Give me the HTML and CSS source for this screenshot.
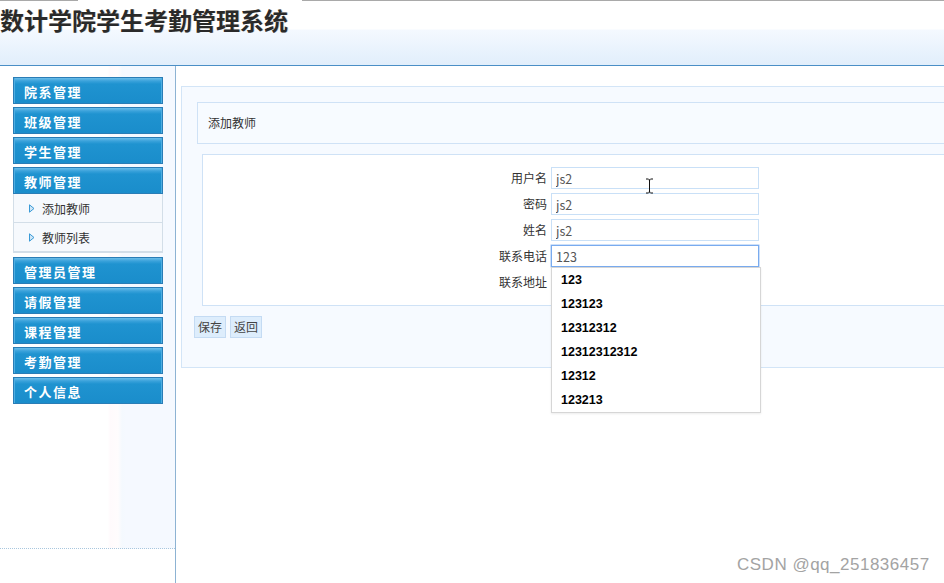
FILE: index.html
```html
<!DOCTYPE html>
<html lang="zh-CN">
<head>
<meta charset="utf-8">
<title>数计学院学生考勤管理系统</title>
<link rel="stylesheet" href="styles.css">
</head>
<body>
<header class="header">
  <h1 class="title">数计学院学生考勤管理系统</h1>
</header>
<div class="layout">
  <aside class="sidebar">
    <div class="side-panel">
      <nav class="menu">
        <div class="menu-btn">院系管理</div>
        <div class="menu-btn">班级管理</div>
        <div class="menu-btn">学生管理</div>
        <div class="menu-btn open">教师管理</div>
        <ul class="submenu">
          <li class="sub-item"><svg class="tri" width="6" height="9" viewBox="0 0 6 9"><path d="M0.5 0.8 L5 4.5 L0.5 8.2 Z" fill="#cfe6f7" stroke="#3a9ad6" stroke-width="1"/></svg>添加教师</li>
          <li class="sub-item"><svg class="tri" width="6" height="9" viewBox="0 0 6 9"><path d="M0.5 0.8 L5 4.5 L0.5 8.2 Z" fill="#cfe6f7" stroke="#3a9ad6" stroke-width="1"/></svg>教师列表</li>
        </ul>
        <div class="menu-btn">管理员管理</div>
        <div class="menu-btn">请假管理</div>
        <div class="menu-btn">课程管理</div>
        <div class="menu-btn">考勤管理</div>
        <div class="menu-btn">个人信息</div>
      </nav>
    </div>
  </aside>
  <main class="main">
    <section class="outer">
      <div class="page-head">添加教师</div>
      <div class="form-box">
        <div class="form-row"><label class="lbl">用户名</label><input class="inp" type="text" value="js2"></div>
        <div class="form-row"><label class="lbl">密码</label><input class="inp" type="text" value="js2"></div>
        <div class="form-row"><label class="lbl">姓名</label><input class="inp" type="text" value="js2"></div>
        <div class="form-row"><label class="lbl">联系电话</label><input class="inp focus" type="text" value="123"></div>
        <div class="form-row"><label class="lbl">联系地址</label><input class="inp" type="text" value=""></div>
      </div>
      <div class="actions">
        <button class="btn">保存</button>
        <button class="btn">返回</button>
      </div>
    </section>
  </main>
</div>
<ul class="autocomplete">
  <li>123</li>
  <li>123123</li>
  <li>12312312</li>
  <li>12312312312</li>
  <li>12312</li>
  <li>123213</li>
</ul>
<svg class="cursor" width="9" height="16" viewBox="0 0 9 16"><path d="M1 1 H3.5 M5.5 1 H8 M3.5 1 Q4.5 1.5 4.5 3 V13 Q4.5 14.5 3.5 15 M5.5 1 Q4.5 1.5 4.5 3 M4.5 13 Q4.5 14.5 5.5 15 M1 15 H3.5 M5.5 15 H8" fill="none" stroke="#111" stroke-width="1"/></svg>
<div class="watermark">CSDN @qq_251836457</div>
</body>
</html>
```

FILE: styles.css
```css
* { box-sizing: border-box; }
html, body {
  margin: 0;
  padding: 0;
  width: 944px;
  height: 583px;
  overflow: hidden;
  background: #fff;
  font-family: "Noto Sans CJK SC", "Liberation Sans", sans-serif;
  color: #333;
}
.header {
  height: 66px;
  border-bottom: 1px solid #4a8fc6;
  background:
    linear-gradient(to right, #a9a9a9 78px, transparent 78px, transparent 302px, #a9a9a9 302px) top left / 100% 1px no-repeat,
    linear-gradient(to bottom, #fff 0, #fff 29px, #f4f9ff 30px, #e1eefb 65px);
}
.title {
  margin: 0;
  padding-top: 5px;
  font-size: 24px;
  line-height: 30px;
  font-weight: bold;
  color: #2a2a2a;
  letter-spacing: 0;
  text-shadow: 1px 0 0 rgba(120,80,40,0.25);
}
.layout {
  display: flex;
  height: 517px;
}
.sidebar {
  width: 176px;
  flex: none;
  border-right: 1px solid #8db3d3;
}
.side-panel {
  height: 483px;
  border-bottom: 1px dotted #a9c7de;
  background: linear-gradient(to right, #fff 108px, #fffafc 110px, #fffcfd 118px, #f4f9fe 122px, #f5f9ff 126px, #f5f9ff 100%);
}
.menu {
  padding: 11px 0 0 13px;
  width: 163px;
}
.menu-btn {
  width: 150px;
  height: 27px;
  margin-bottom: 3px;
  border: 1px solid #2a7db6;
  background: linear-gradient(to bottom, #6cbde9 0, #3aa2db 3px, #1f93d0 6px, #1a8dcb 100%);
  box-shadow: inset 1px 0 0 #4eaee2, inset -1px 0 0 #4eaee2;
  color: #fff;
  font-size: 13px;
  font-weight: bold;
  line-height: 27px;
  padding-left: 10px;
  letter-spacing: 1.5px;
}
.menu-btn.open { margin-bottom: 0; }
.submenu {
  list-style: none;
  margin: 0 0 4px 0;
  padding: 0;
  width: 150px;
  border-left: 1px solid #d3dee8;
  border-right: 1px solid #d3dee8;
  background: #f6f9fd;
}
.sub-item {
  height: 29px;
  border-bottom: 1px solid #d3dee8;
  display: flex;
  align-items: center;
  padding-left: 15px;
  font-size: 12px;
  color: #333;
}
.sub-item:last-child { height: 30px; border-bottom: 2px solid #d3dee8; }
.tri { margin-right: 7px; flex: none; }
.main {
  flex: 1;
  overflow: hidden;
  padding: 20px 0 0 5px;
}
.outer {
  width: 1000px;
  height: 282px;
  border: 1px solid #d3e5f7;
  background: #f6faff;
  padding-top: 15px;
}
.page-head {
  margin-left: 15px;
  height: 42px;
  border: 1px solid #cfe2f6;
  background: #f7fbff;
  font-size: 12px;
  line-height: 40px;
  padding-left: 10px;
  color: #333;
}
.form-box {
  margin: 10px 0 0 20px;
  height: 152px;
  border: 1px solid #cfe2f6;
  background: #fff;
  padding-top: 12px;
}
.form-row {
  display: grid;
  grid-template-columns: 344px 208px;
  column-gap: 4px;
  height: 26px;
  align-items: start;
}
.lbl {
  text-align: right;
  font-size: 12px;
  line-height: 22px;
  color: #333;
}
.inp {
  width: 208px;
  height: 22px;
  border: 1px solid #c9e0f7;
  background: #fff;
  padding: 0 4px;
  font-family: "Noto Sans CJK SC", "Liberation Sans", sans-serif;
  font-size: 12.5px;
  color: #555;
  outline: none;
  margin: 0;
}
.inp.focus { border-color: #79abef; box-shadow: 0 0 0 0.5px #9cc2f4; }
.actions {
  display: flex;
  gap: 4px;
  margin: 10px 0 0 12px;
}
.btn {
  width: 32px;
  height: 22px;
  padding: 0;
  border: 1px solid #c4dbf3;
  background: #ddedfc;
  font-family: "Noto Sans CJK SC", sans-serif;
  font-size: 12px;
  color: #444;
  line-height: 20px;
}
.autocomplete {
  position: absolute;
  left: 551px;
  top: 267px;
  width: 210px;
  height: 146px;
  margin: 0;
  padding: 0;
  list-style: none;
  background: #fff;
  border: 1px solid #d6d6d6;
  box-shadow: 0 1px 2px rgba(0,0,0,0.08);
}
.autocomplete li {
  height: 24px;
  line-height: 24px;
  padding-left: 9px;
  font-family: "Liberation Sans", Arial, sans-serif;
  font-weight: bold;
  font-size: 12.5px;
  color: #000;
}
.cursor {
  position: absolute;
  left: 645px;
  top: 178px;
}
.watermark {
  position: absolute;
  left: 737px;
  top: 554px;
  font-family: "Liberation Sans", Arial, sans-serif;
  font-size: 17px;
  letter-spacing: 0.5px;
  line-height: 22px;
  color: #a3a3a3;
}
```
